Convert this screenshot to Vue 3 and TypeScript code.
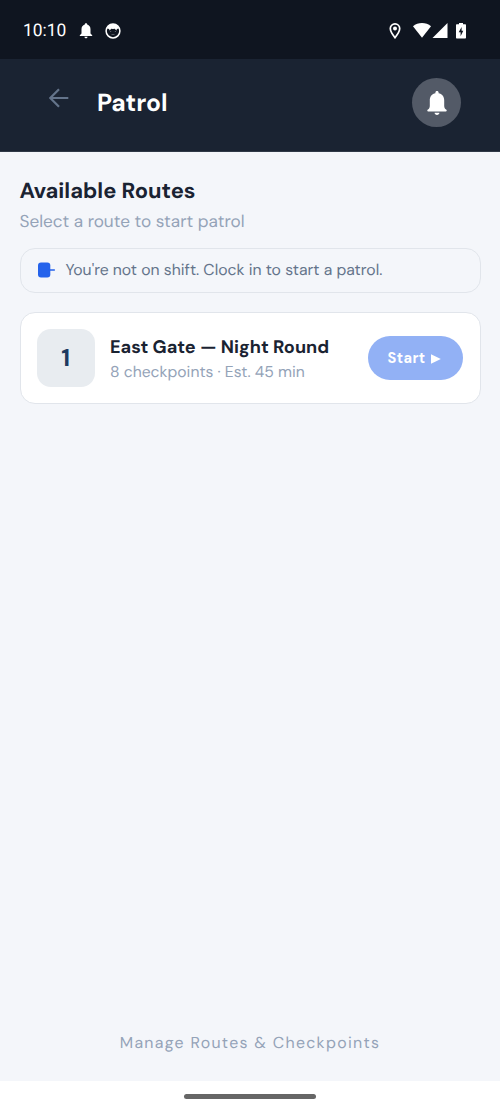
<script setup lang="ts">
interface PatrolRoute {
  id: number
  name: string
  checkpoints: number
  minutes: number
}

const routes: PatrolRoute[] = [
  { id: 1, name: 'East Gate — Night Round', checkpoints: 8, minutes: 45 },
]
const onShift = false
</script>

<template>
  <div class="screen">
    <div class="status-bar">
      <span class="clock">10:10</span>
      <svg class="status-bell" width="14" height="16" viewBox="0 0 14 16">
        <path fill="#fff" d="M7 .3c.8 0 1.200.5 1.200 1.300 2.100.6 3.300 2.300 3.300 4.700v4.200l1.700 1.700v.8H.8v-.8l1.700-1.700V6.300c0-2.400 1.200-4.100 3.300-4.700C5.800.8 6.200.3 7 .3zM5.400 13.700h3.200c0 .9-.7 1.500-1.600 1.500s-1.600-.6-1.600-1.500z" />
      </svg>
      <svg class="status-face" width="16" height="16" viewBox="0 0 16 16">
        <circle cx="8" cy="8" r="6.900" fill="none" stroke="#fff" stroke-width="1.500" />
        <path fill="#fff" d="M2 5.500C3.200 2 5.200.9 8 .9s4.800 1.100 6 4.600l-2.100.4-.5 1.500-1.700-1.700-1.700.4-1.700-.4-1.700 1.700-.5-1.500z" />
        <path fill="#fff" d="M5 8.200h1.200v.9H5zM9.800 8.200H11v.9H9.800zM6.500 11.200h3v.7h-3z" opacity=".4" />
      </svg>
      <span class="spacer"></span>
      <svg class="status-pin" width="12" height="16" viewBox="0 0 12 16">
        <path fill="none" stroke="#fff" stroke-width="1.700" d="M6 .9c2.700 0 4.700 2 4.700 4.700C10.700 8.900 6 14.700 6 14.700S1.300 8.900 1.300 5.600C1.300 2.900 3.300.9 6 .9z" />
        <circle cx="6" cy="5.600" r="2" fill="#fff" />
      </svg>
      <svg class="status-wifi" width="18" height="16" viewBox="0 0 18 16">
        <path fill="#fff" d="M0 3.300C2.500 1.200 5.700.1 9 .1s6.500 1.100 9 3.200L9 14.700z" />
      </svg>
      <svg class="status-signal" width="16" height="16" viewBox="0 0 16 16">
        <path fill="#fff" d="M15.500 0V14.900H.5z" />
      </svg>
      <svg class="status-battery" width="10" height="16" viewBox="0 0 10 16">
        <path fill="#fff" fill-rule="evenodd" d="M3 0h4v1.300h2c.6 0 1 .4 1 1V14.500c0 .6-.4 1-1 1H1c-.6 0-1-.4-1-1V2.300c0-.6.4-1 1-1h2zM5.600 3.900L2.700 9.200h1.900v4l2.700-5.500H5.600z" />
      </svg>
    </div>

    <header class="app-bar">
      <button class="back" aria-label="Back">
        <svg width="20" height="20" viewBox="0 0 20 20">
          <path d="M19.300 10H1.500M10 1.200L1.300 10l8.700 8.800" fill="none" stroke="#64748b" stroke-width="2.200" />
        </svg>
      </button>
      <h1 class="title"><span>Patrol</span></h1>
      <button class="alerts" aria-label="Alerts">
        <svg width="20" height="24" viewBox="0 0 20 24">
          <path fill="#fff" d="M10 0c1 0 1.600.7 1.600 1.600v.6c3.300.7 5.600 3.200 5.600 7v5.500c0 1.900.6 3 1.900 3.900.9.6.9 2-.4 2H1.300c-1.300 0-1.300-1.400-.4-2 1.300-.9 1.900-2 1.900-3.900V9.200c0-3.800 2.300-6.300 5.600-7v-.6C8.400.7 9 0 10 0zM7.600 21.700h4.800c0 1.400-1 2.200-2.400 2.200s-2.400-.8-2.400-2.200z" />
        </svg>
      </button>
    </header>

    <main class="content">
      <h2 class="heading"><span>Available Routes</span></h2>
      <p class="subheading"><span>Select a route to start patrol</span></p>

      <div v-if="!onShift" class="notice">
        <svg width="18" height="16" viewBox="0 0 18 16">
          <rect x="0" y=".5" width="12.300" height="15" rx="3" fill="#2563eb" />
          <path d="M11 8h5.300" stroke="#2563eb" stroke-width="1.500" stroke-linecap="round" />
        </svg>
        <span class="notice-text">You're not on shift. Clock in to start a patrol.</span>
      </div>

      <article v-for="route in routes" :key="route.id" class="route">
        <div class="number">{{ route.id }}</div>
        <div class="details">
          <div class="name"><span>{{ route.name }}</span></div>
          <div class="meta"><span>{{ route.checkpoints }} checkpoints · Est. {{ route.minutes }} min</span></div>
        </div>
        <button class="start" :disabled="!onShift">
          <span>Start</span>
          <svg width="10" height="10" viewBox="0 0 10 10"><path d="M0 .3L9.800 5 0 9.700z" fill="#fff" /></svg>
        </button>
      </article>

      <a class="manage"><span>Manage Routes &amp; Checkpoints</span></a>
    </main>

    <div class="nav-bar"><div class="handle"></div></div>
  </div>
</template>

<style>
body {
  margin: 0;
}
</style>

<style scoped>
.screen {
  width: 500px;
  height: 1111px;
  display: flex;
  flex-direction: column;
  overflow: hidden;
  background: #f4f6fa;
  font-family: "DM Sans", Inter, "Liberation Sans", sans-serif;
  font-optical-sizing: none;
  font-variation-settings: "opsz" 14;
  text-rendering: geometricPrecision;
  white-space: nowrap;
}
button {
  border: 0;
  padding: 0;
  background: none;
  font-family: inherit;
}
svg {
  display: block;
  flex: none;
}
.status-bar {
  box-sizing: border-box;
  height: 59px;
  flex: none;
  display: flex;
  align-items: center;
  padding: 2px 34px 0 23px;
  background: #0f1520;
  color: #fff;
}
.clock {
  width: 56px;
  font: 17.4px/22px Roboto, sans-serif;
}
.status-face {
  margin-left: 12px;
}
.spacer {
  flex: 1;
}
.status-wifi {
  margin-left: 12px;
}
.status-signal {
  margin-left: 1px;
}
.status-battery {
  margin-left: 8px;
}
.app-bar {
  box-sizing: border-box;
  height: 93px;
  flex: none;
  display: flex;
  align-items: center;
  padding: 0 39px 4.5px 49px;
  background: #1a2332;
  border-bottom: 1px solid #303947;
}
.back {
  width: 48px;
  margin-top: -10px;
}
.title {
  flex: 1;
  margin: 0;
  color: #fff;
  font-size: 24.6px;
  line-height: 30px;
  font-weight: 700;
}
.alerts {
  width: 49px;
  height: 49px;
  border-radius: 50%;
  display: flex;
  align-items: center;
  justify-content: center;
  background: #535a67;
}
.content {
  flex: 1;
  display: flex;
  flex-direction: column;
  padding: 24px 19.5px 0;
}
.heading {
  margin: 0;
  color: #1a2332;
  font-size: 21.9px;
  line-height: 30px;
  font-weight: 700;
}
.subheading {
  margin: 5px 0 14px;
  color: #94a3b8;
  font-size: 17.2px;
  line-height: 23px;
}
.notice {
  box-sizing: border-box;
  height: 45px;
  display: flex;
  align-items: center;
  gap: 10px;
  padding: 0 17px 2px;
  border: 1px solid #e1e5eb;
  border-radius: 15px;
}
.notice-text {
  color: #64748b;
  font-size: 15.75px;
}
.route {
  box-sizing: border-box;
  height: 92px;
  margin-top: 19px;
  display: flex;
  align-items: center;
  padding: 0 16.5px 0 16px;
  border: 1px solid #e1e5eb;
  border-radius: 15px;
  background: #fff;
}
.number {
  width: 58.5px;
  height: 58px;
  border-radius: 14px;
  background: #e8ecf0;
  color: #1e3a5f;
  font-size: 24.3px;
  line-height: 58px;
  font-weight: 700;
  text-align: center;
}
.details {
  flex: 1;
  margin-left: 15px;
}
.name {
  padding-top: 3px;
  color: #1a2332;
  font-size: 18.1px;
  line-height: 24px;
  font-weight: 700;
}
.meta {
  color: #94a3b8;
  font-size: 15.7px;
  line-height: 25px;
}
.start {
  box-sizing: border-box;
  width: 95px;
  height: 44px;
  padding-right: 2px;
  border-radius: 22px;
  display: flex;
  align-items: center;
  justify-content: center;
  gap: 6px;
  background: #92b1f5;
  color: #fff;
  font-size: 14.6px;
  letter-spacing: 0.4px;
  font-weight: 700;
}
.start span {
  padding-top: 1px;
}
.start svg {
  margin-top: 1px;
}
.manage {
  margin: auto 0 26px;
  text-align: center;
  color: #94a3b8;
  font-size: 15.9px;
  line-height: 24px;
  letter-spacing: 1.3px;
}
.nav-bar {
  height: 30px;
  flex: none;
  display: flex;
  align-items: center;
  justify-content: center;
  background: #fff;
}
.handle {
  width: 132px;
  height: 5px;
  border-radius: 3px;
  background: #666;
}
</style>
